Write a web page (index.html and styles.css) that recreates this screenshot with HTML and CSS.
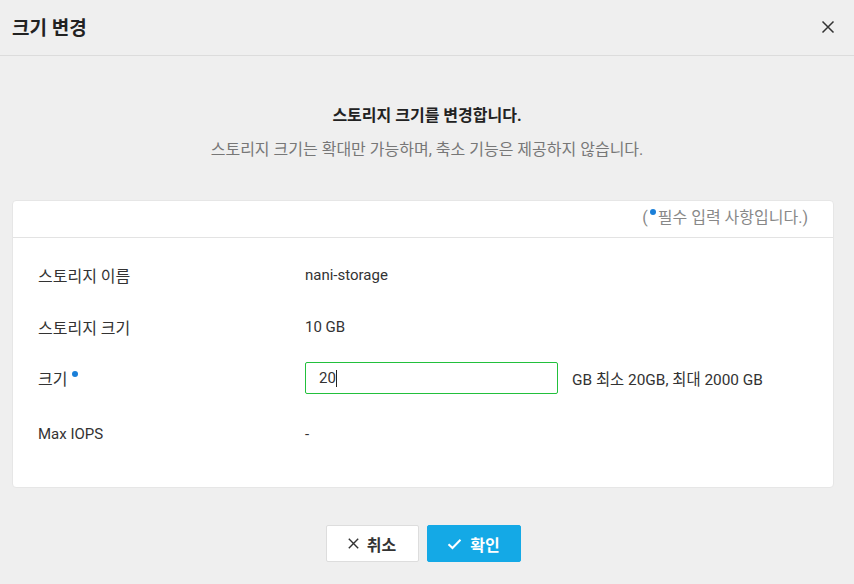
FILE: index.html
```html
<!DOCTYPE html>
<html lang="ko">
<head>
<meta charset="utf-8">
<link rel="stylesheet" href="styles.css">
</head>
<body>
<div class="dialog">
  <header class="dlg-header">
    <h1 class="dlg-title">크기 변경</h1>
    <button class="close" aria-label="닫기">
      <svg width="14" height="14" viewBox="0 0 14 14"><path d="M1.5 1.5L12.5 12.5M12.5 1.5L1.5 12.5" stroke="#333" stroke-width="1.5" fill="none"/></svg>
    </button>
  </header>
  <section class="intro">
    <p class="intro-main">스토리지 크기를 변경합니다.</p>
    <p class="intro-sub">스토리지 크기는 확대만 가능하며, 축소 기능은 제공하지 않습니다.</p>
  </section>
  <section class="card">
    <div class="card-head">(<span class="dot"></span>필수 입력 사항입니다.)</div>
    <div class="card-body">
      <div class="row">
        <div class="label">스토리지 이름</div>
        <div class="value">nani-storage</div>
      </div>
      <div class="row">
        <div class="label">스토리지 크기</div>
        <div class="value">10 GB</div>
      </div>
      <div class="row row-input">
        <div class="label">크기<span class="dot dot-label"></span></div>
        <div class="value">
          <div class="input">20<span class="caret"></span></div>
          <span class="suffix">GB 최소 20GB, 최대 2000 GB</span>
        </div>
      </div>
      <div class="row">
        <div class="label label-latin">Max IOPS</div>
        <div class="value">-</div>
      </div>
    </div>
  </section>
  <footer class="actions">
    <button class="btn btn-cancel">
      <svg width="11" height="11" viewBox="0 0 11 11"><path d="M0.8 0.8L10.2 10.2M10.2 0.8L0.8 10.2" stroke="#333" stroke-width="1.4" fill="none"/></svg>
      취소
    </button>
    <button class="btn btn-ok">
      <svg width="15" height="12" viewBox="0 0 15 12"><path d="M1.5 6.2L5.5 10L13.5 1.8" stroke="#fff" stroke-width="2" fill="none"/></svg>
      확인
    </button>
  </footer>
</div>
</body>
</html>
```

FILE: styles.css
```css
* { box-sizing: border-box; }
html, body { margin: 0; padding: 0; }
body {
  background: #efefef;
  font-family: Roboto, "Noto Sans CJK KR", sans-serif;
  color: #333;
  font-size: 15px;
  width: 854px;
  height: 584px;
  overflow: hidden;
}
.dialog { display: flex; flex-direction: column; }
.dlg-header {
  height: 56px;
  border-bottom: 1px solid #dcdcdc;
  display: flex;
  align-items: center;
  justify-content: space-between;
  padding: 0 19px 2px 12px;
}
.dlg-title {
  margin: 0;
  font-size: 19px;
  font-weight: 700;
  color: #222;
}
.close {
  border: 0;
  background: none;
  padding: 0;
  width: 14px;
  height: 14px;
  display: flex;
  cursor: pointer;
}
.intro {
  text-align: center;
  padding-top: 49px;
}
.intro p { margin: 0; }
.intro-main {
  font-weight: 700;
  color: #222;
  font-size: 16px;
  line-height: 22px;
}
.intro-sub {
  color: #777;
  font-size: 16px;
  line-height: 24px;
  margin-top: 11px !important;
}
.card {
  margin: 38px 20px 0 12px;
  background: #fff;
  border: 1px solid #e6e6e6;
  border-radius: 4px;
  height: 288px;
}
.card-head {
  height: 37px;
  border-bottom: 1px solid #e3e3e3;
  text-align: right;
  padding: 5px 25px 0 0;
  color: #888;
  font-size: 16px;
  line-height: 24px;
}
.dot {
  display: inline-block;
  width: 6px;
  height: 6px;
  border-radius: 50%;
  background: #1a7fd8;
  vertical-align: 8px;
  margin: 0 2px 0 2px;
}
.dot-label { margin-left: 5px; vertical-align: 8px; }
.card-body {
  padding: 21px 25px 0;
  display: flex;
  flex-direction: column;
}
.row {
  display: flex;
  align-items: center;
  height: 32px;
  margin-bottom: 20px;
  color: #333;
  font-size: 15px;
}
.row-input { margin-top: -1px; margin-bottom: 24px; }
.label { width: 267px; flex: none; font-size: 16px; }
.label-latin { font-size: 15px; }
.value { display: flex; align-items: center; }
.input {
  width: 253px;
  height: 32px;
  border: 1px solid #22c03c;
  border-radius: 2px;
  padding: 0 13px;
  display: flex;
  align-items: center;
  color: #333;
}
.caret {
  display: inline-block;
  width: 1px;
  height: 17px;
  background: #222;
}
.suffix { margin-left: 14px; font-size: 15.4px; }
.actions {
  display: flex;
  justify-content: center;
  gap: 8px;
  margin-top: 37px;
  padding-right: 8px;
}
.btn {
  height: 37px;
  border-radius: 2px;
  font-family: Roboto, "Noto Sans CJK KR", sans-serif;
  font-size: 16px;
  font-weight: 700;
  display: flex;
  align-items: center;
  justify-content: center;
  gap: 8px;
  cursor: pointer;
  padding: 0;
}
.btn-cancel {
  width: 93px;
  background: #fff;
  border: 1px solid #ddd;
  color: #333;
}
.btn-ok {
  width: 94px;
  background: #14a9e6;
  border: 1px solid #14a9e6;
  color: #fff;
}
```
